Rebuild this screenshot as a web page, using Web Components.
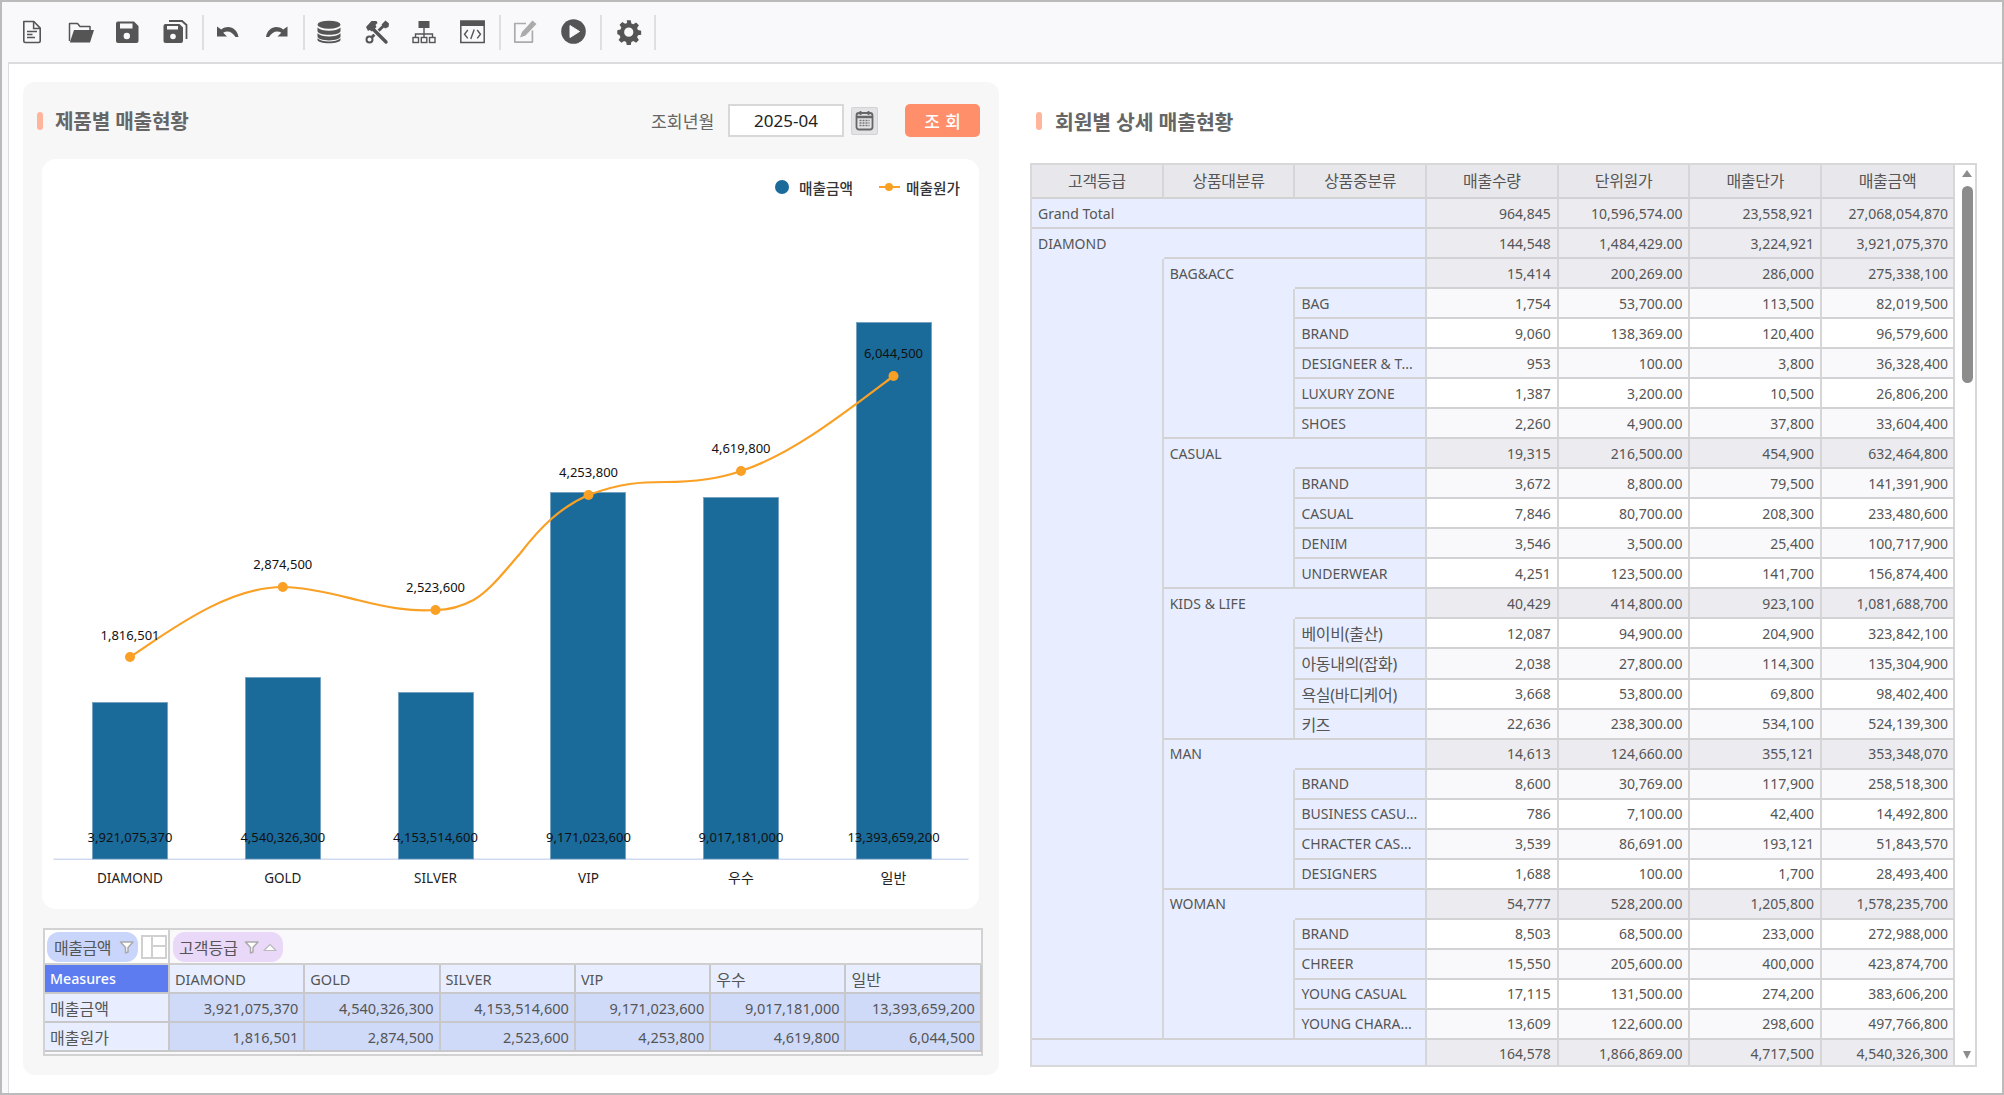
<!DOCTYPE html>
<html lang="ko"><head><meta charset="utf-8"><title>매출현황</title>
<style>
html,body{margin:0;height:100%;overflow:hidden}
body{font-family:"Noto Sans","Noto Sans CJK KR",sans-serif;background:#fff}
app-shell{height:1095px}
</style></head><body>
<app-shell>
  <tool-bar slot="bar"></tool-bar>
  <sales-panel slot="left" heading="제품별 매출현황">
    <query-form slot="tools"></query-form>
    <sales-chart></sales-chart>
    <pivot-mini></pivot-mini>
  </sales-panel>
  <member-panel slot="right" heading="회원별 상세 매출현황">
    <detail-table></detail-table>
  </member-panel>
</app-shell>
<script>
const KFONT='"Noto Sans","Noto Sans CJK KR",sans-serif';
function def(name,html,extra){
  class C extends HTMLElement{
    constructor(){super();this.attachShadow({mode:'open'}).innerHTML=typeof html==='function'?html(this):html;}
    connectedCallback(){if(extra)extra(this);}
  }
  customElements.define(name,C);
}
def('app-shell',`<style>
:host{display:flex;flex-direction:column;box-sizing:border-box;border:2px solid #bbb;border-left-width:2px;background:#f9f9fb;width:2004px}
.main{flex:1;margin-left:6px;background:#fff;border-top:2px solid #dcdcdf;border-left:1px solid #dcdcdf;display:flex;padding:18px 0 16px 14px;min-height:0;gap:31px}
</style><slot name="bar"></slot><div class="main"><slot name="left"></slot><slot name="right"></slot></div>`);

const D='#555';
const ICONS={
 file:`<path fill="none" stroke="${D}" stroke-width="1.6" stroke-linejoin="round" d="M3.8 1.5h10l6.4 6.6v13a1.4 1.4 0 0 1-1.4 1.4H5.2a1.4 1.4 0 0 1-1.4-1.4z"/><path fill="none" stroke="${D}" stroke-width="1.5" d="M13.6 1.8v6.6h6.4"/><path stroke="${D}" stroke-width="1.5" d="M7 11.5h10M7 14.5h5.5M7 17.5h8"/>`,
 open:`<path fill="none" stroke="${D}" stroke-width="1.5" stroke-linejoin="round" d="M1.5 21V3.5h8l2.5 3h10V10"/><path fill="${D}" d="M6 10h20l-4 12.5H1.8z"/>`,
 save:`<path fill="${D}" d="M2.5 1.5h16l4.5 4.5v15a2 2 0 0 1-2 2H2.5a2 2 0 0 1-2-2v-17.5a2 2 0 0 1 2-2z" transform="translate(.5 0)"/><rect x="5" y="3.5" width="12.5" height="5" fill="#f9f9fb"/><circle cx="11.8" cy="16" r="3.2" fill="#f9f9fb"/>`,
 saveas:`<path fill="none" stroke="${D}" stroke-width="1.8" d="M6 1h13l4.500 4v14"/><path fill="${D}" d="M2.5 4h14l3.5 3.500V21a2 2 0 0 1-2 2H2.5a2 2 0 0 1-2-2V6a2 2 0 0 1 2-2z"/><rect x="4" y="6" width="11" height="3.5" fill="#f9f9fb"/><circle cx="10" cy="16.5" r="2.8" fill="#f9f9fb"/>`,
 undo:`<path fill="${D}" d="M1 5.5v10h10l-3.800-3.800c3.800-2.600 9.200-1.400 12.300 4.300h3C21 7 12.500 3.200 5.300 8.500z" transform="translate(0 1)"/>`,
 redo:`<path fill="${D}" d="M23.5 5.5v10h-10l3.800-3.800c-3.800-2.600-9.200-1.400-12.300 4.300H2C3.500 7 12 3.200 19.200 8.500z" transform="translate(0 1)"/>`,
 db:`<ellipse cx="12" cy="4.7" rx="11.5" ry="4" fill="${D}"/><path fill="${D}" d="M.5 7.500C3 10 7 10.700 12 10.700s9-.7 11.500-3.200v3.400c0 2.300-5.100 3.900-11.500 3.900S.5 13.200.5 10.900z"/><path fill="${D}" d="M.5 13.200C3 15.700 7 16.400 12 16.400s9-.7 11.500-3.200v3.400c0 2.300-5.100 3.900-11.500 3.900S.5 18.900.5 16.600z"/><path fill="${D}" d="M.5 18.200c2.500 2.500 6.500 3.200 11.500 3.200s9-.7 11.500-3.200v1.500c0 2.300-5.100 3.500-11.500 3.500S.5 22 .5 19.700z"/>`,
 tools:`<g fill="${D}"><path fill="none" stroke="${D}" stroke-width="3" d="M20 4.500 6.500 17.500"/><circle cx="4.500" cy="19.500" r="3" fill="none" stroke="${D}" stroke-width="2"/><path d="M16.500 4.500 20.500.5 24 3.500 23.500 7 20 8.500z"/><path fill="none" stroke="#f9f9fb" stroke-width="6" d="M8 9 20.500 22"/><path fill="none" stroke="${D}" stroke-width="3.400" stroke-linecap="round" d="M8 9 21 22"/><path d="M1 7 6.500 1h5l1 2-2 2 1 2-4.500 4.500-2.500-1.500-1.500 1z"/></g>`,
 tree:`<g fill="none" stroke="${D}" stroke-width="1.4"><path d="M12 7v4M3.500 17v-3h17v3M12 11v6"/><rect x="1" y="17.5" width="5.5" height="5"/><rect x="9.3" y="17.5" width="5.5" height="5"/><rect x="17.5" y="17.5" width="5.5" height="5"/></g><rect x="6.5" y="1" width="11" height="7" fill="${D}"/>`,
 code:`<rect x=".8" y="1" width="23.4" height="21.5" fill="none" stroke="${D}" stroke-width="1.5"/><rect x=".8" y="1" width="23.4" height="5" fill="${D}"/><path fill="none" stroke="${D}" stroke-width="1.4" d="M7.800 10 4.500 14.200l3.300 4.200M17.200 10l3.300 4.200-3.300 4.200M14.200 9.500l-3.400 9.500"/>`,
 edit:`<path fill="none" stroke="#ababab" stroke-width="1.7" stroke-linejoin="round" d="M13 3.500H1.800v18.600h17.600V10.500"/><path fill="#ababab" d="M19.500.5 23.500 4 12.500 15.500 7 17.500 9 12z"/>`,
 play:`<circle cx="12.5" cy="11.5" r="12.3" fill="${D}"/><path fill="#f9f9fb" d="M9 5.500 18.500 11.500 9 17.500z" stroke="#f9f9fb" stroke-linejoin="round"/>`,
 gear:`<path fill="${D}" fill-rule="evenodd" d="M10.400.3h4.200l.7 3.400 2.100.9 2.900-1.900 3 3-1.900 2.900.9 2.100 3.400.7v4.200l-3.400.7-.9 2.100 1.900 2.900-3 3-2.900-1.900-2.100.9-.7 3.400h-4.200l-.7-3.400-2.100-.9-2.900 1.900-3-3 1.900-2.900-.9-2.100L.3 15v-4.200l3.400-.7.9-2.100-1.900-2.900 3-3 2.900 1.900 2.100-.9zM12.500 8a4.900 4.900 0 1 0 0 9.800 4.900 4.900 0 0 0 0-9.800z" transform="scale(.94)"/>`
};
def('tool-btn',h=>`<style>:host{display:flex;width:47.5px;height:100%;align-items:center;justify-content:center}svg{display:block;overflow:visible}</style><svg width="25" height="24" viewBox="0 0 25 24">${ICONS[h.getAttribute('icon')]||''}</svg>`);
def('tool-bar',`<style>
:host{display:flex;align-items:center;height:60px;box-sizing:border-box;padding-left:7px;flex:none}
.s{width:2px;height:35px;background:#dfdfe2;margin:0 1px 0 3px;flex:none}
.x{margin-right:4px}
.z{margin-left:0}
</style>
<tool-btn icon="file"></tool-btn><tool-btn icon="open"></tool-btn><tool-btn icon="save"></tool-btn><tool-btn icon="saveas"></tool-btn><i class="s"></i>
<tool-btn icon="undo"></tool-btn><tool-btn icon="redo"></tool-btn><i class="s"></i>
<tool-btn icon="db"></tool-btn><tool-btn icon="tools"></tool-btn><tool-btn icon="tree"></tool-btn><tool-btn icon="code"></tool-btn><i class="s"></i>
<tool-btn icon="edit"></tool-btn><tool-btn icon="play"></tool-btn><i class="s x"></i>
<tool-btn icon="gear"></tool-btn><i class="s z"></i>`);

const HEAD=`.h{display:flex;align-items:center;height:77px;flex:none}
.m{width:6px;height:18px;border-radius:3px;background:#ffb59c;margin-right:12px;flex:none}
.t{font-size:20.2px;font-weight:700;color:#666;letter-spacing:-.2px;white-space:nowrap}`;
def('sales-panel',h=>`<style>
:host{display:flex;flex-direction:column;box-sizing:border-box;width:976px;height:993px;background:#f7f7f8;border-radius:12px;padding:0 19px 0 14px}
${HEAD}
.tl{margin-left:auto}
::slotted(sales-chart){margin-left:4.5px}
::slotted(pivot-mini){margin:19px -3px 0 6px}
</style><div class="h"><i class="m"></i><span class="t">${h.getAttribute('heading')}</span><span class="tl"><slot name="tools"></slot></span></div><slot></slot>`);
def('member-panel',h=>`<style>
:host{display:flex;flex-direction:column;box-sizing:border-box;width:947px}
${HEAD}
.h{padding-left:6px;margin-bottom:4px}
.m{margin-right:13px}
.t{font-size:20.5px}
</style><div class="h"><i class="m"></i><span class="t">${h.getAttribute('heading')}</span></div><slot></slot>`);

def('query-form',`<style>
:host{display:flex;align-items:center;color:#666;font-size:17.2px}
.l{width:77px}
.i{box-sizing:border-box;width:116px;height:33px;border:2px solid #d8d8d8;background:#fff;color:#222;font-size:17px;display:flex;align-items:center;justify-content:center}
.c{box-sizing:border-box;width:27px;height:28px;margin:0 27px 0 7px;background:#e3e3e5;border:1px solid #d3d3d5;border-radius:2px;display:flex;align-items:center;justify-content:center}
.b{box-sizing:border-box;width:75px;height:33px;background:#ff8e6b;border-radius:5px;color:#fff;display:flex;align-items:center;justify-content:center;font-weight:500;font-size:17px;word-spacing:1px}
svg{display:block}
</style><span class="l">조회년월</span><span class="i">2025-04</span>
<span class="c"><svg width="19" height="21" viewBox="0 0 19 21"><rect x="1.5" y="3" width="16" height="16.5" rx="2.5" fill="none" stroke="#666" stroke-width="1.8"/><path d="M1.500 7h16" stroke="#666" stroke-width="2.5"/><path d="M5.500 1v4M13.500 1v4" stroke="#666" stroke-width="1.8"/><path d="M4.500 10.500h10M4.500 13h10M4.500 15.500h10" stroke="#777" stroke-width="1.4" stroke-dasharray="2 1"/></svg></span>
<span class="b">조 회</span>`);

const POINTS=[129.5,282.3,435,588,740.5,893];
const BARS=[[92,702.5,'3,921,075,370','DIAMOND'],[245,677.5,'4,540,326,300','GOLD'],[398,692.5,'4,153,514,600','SILVER'],[550,492.5,'9,171,023,600','VIP'],[703,497.5,'9,017,181,000','우수'],[856,322.5,'13,393,659,200','일반']];
const LINE=[[657,'1,816,501',635],[587,'2,874,500',564],[610,'2,523,600',587],[495,'4,253,800',472],[471,'4,619,800',448],[376,'6,044,500',353]];
def('sales-chart',()=>{
  let s='';
  s+=`<path d="M53 859.3H968" stroke="#cfdaf0" stroke-width="1.5"/>`;
  BARS.forEach(b=>{s+=`<rect x="${b[0]}" y="${b[1]}" width="75" height="${859-b[1]}" fill="#1a6a9a" stroke="#6b9cbc" stroke-width=".7"/>`;});
  s+=`<path fill="none" stroke="#f9a025" stroke-width="2.2" d="M129.500 657C165 634 225 587 282.300 587C310 587 340 596 357 600C385 607 410 612 435 610C450 610 462 606 473 600C490 590 505 570 520 553C540 527 560 507 588 495C620 483 640 482 665 482C690 482 715 480 740.500 471C790 455 840 416 893 376"/>`;
  LINE.forEach((l,i)=>{s+=`<circle cx="${POINTS[i]}" cy="${l[0]}" r="5" fill="#f9a025"/>`;});
  BARS.forEach((b,i)=>{
    s+=`<text x="${POINTS[i]}" y="842" class="v">${b[2]}</text>`;
    s+=`<text x="${POINTS[i]}" y="883" class="c${/[가-힣]/.test(b[3])?' k':''}">${b[3]}</text>`;
  });
  LINE.forEach((l,i)=>{s+=`<text x="${POINTS[i]}" y="${l[2]+5}" class="v">${l[1]}</text>`;});
  return `<style>
:host{display:block;box-sizing:border-box;width:937.5px;height:750px;background:#fff;border-radius:14px}
.leg{display:flex;justify-content:flex-end;align-items:center;height:56px;padding-right:19px;font-size:14.7px;color:#333;font-weight:500}
.leg i{display:block;flex:none}
.d{width:14px;height:14px;border-radius:50%;background:#1a6a9a;margin-right:10px}
.li{width:21px;height:2.5px;background:#f9a025;position:relative;margin:0 6px 0 26px}
.li::after{content:"";position:absolute;left:6px;top:-3px;width:8px;height:8px;border-radius:50%;background:#f9a025}
svg{display:block;width:937.5px;height:694px}
text{font-size:13px;text-anchor:middle;fill:#111;font-family:${KFONT}}
.c{font-size:13.5px;fill:#222}.k{font-size:14px}
</style><div class="leg"><i class="d"></i><span>매출금액</span><i class="li"></i><span>매출원가</span></div>
<svg viewBox="41.5 215 937.5 694">${s}</svg>`;
});

const fil=`<svg width="20" height="18" viewBox="1 0 20 18"><path d="M4.500 4h12.500l-5 5.500V14l-2.500 1V9.500z" fill="#fff" stroke="#aaa" stroke-width="1.5" stroke-linejoin="round"/></svg>`;
const PV=[['Measures','DIAMOND','GOLD','SILVER','VIP','우수','일반'],['매출금액','3,921,075,370','4,540,326,300','4,153,514,600','9,171,023,600','9,017,181,000','13,393,659,200'],['매출원가','1,816,501','2,874,500','2,523,600','4,253,800','4,619,800','6,044,500']];
def('pivot-mini',()=>{
 let c='';
 PV.forEach((r,ri)=>r.forEach((v,ci)=>{
  const k=/[가-힣]/.test(v)?' k':'';
  const cl=ri==0?(ci==0?'me':'hd'):(ci==0?'hd':'da');
  c+=`<div class="${cl}${k}">${v}</div>`;
 }));
 return `<style>
:host{display:flex;flex-direction:column;box-sizing:border-box;height:128px;border:2px solid #d2d2d2;background:#f9f9fb;color:#555;font-size:14.5px}
.top{display:flex;align-items:center;height:35px;flex:none;border-bottom:2px solid #cfcfcf;box-sizing:border-box}
.zone{display:flex;align-items:center;height:100%;box-sizing:border-box;padding-left:2px}
.z1{width:125px;background:#fff;border-right:2px solid #cfcfcf}
.chip{display:flex;align-items:center;height:30px;border-radius:12px;box-sizing:border-box;font-size:16px;color:#555}
.c1{background:#c9d5fb;width:91px;justify-content:space-between;padding:0 1px 0 7px;letter-spacing:-.5px}
.c2{background:#e9d8f8;width:110px;padding:0 2px 0 6px}
.c2 svg:first-of-type{margin-left:4px}
.lay{width:26px;height:24px;margin-left:3px;background:#fff;border:2px solid #d0d0d0;box-sizing:border-box;flex:none}
svg{display:block;flex:none}
.g{display:grid;grid-template-columns:125px repeat(6,135.3px);grid-auto-rows:29px;flex:none}
.g>div{box-sizing:border-box;border-right:2px solid #c8c8ca;border-bottom:2px solid #c8c8ca;display:flex;align-items:center;padding:0 5px;white-space:nowrap;overflow:hidden}
.me{background:#5c7cf0;color:#fff;font-size:14.2px;font-weight:500}
.hd{background:#e8eeff}
.da{background:#cfdaf9;justify-content:flex-end;padding-right:5px!important}
.k{font-size:16px}
</style>
<div class="top"><div class="zone z1"><span class="chip c1">매출금액${fil}</span><span class="lay"><svg width="22" height="20" viewBox="0 0 22 20"><path d="M9 0v20M9 9h13" stroke="#d0d0d0" stroke-width="2"/></svg></span></div>
<div class="zone" style="padding-left:3px"><span class="chip c2">고객등급${fil}<svg width="16" height="12" viewBox="0 0 16 12"><path d="M2 9.500 8 3.500l6 6z" fill="#fff" stroke="#bbb" stroke-width="1.2" stroke-linejoin="round"/></svg></span></div></div>
<div class="g">${c}</div>`;
});

const DATA=[
[0,'Grand Total','964,845','10,596,574.00','23,558,921','27,068,054,870'],
[0,'DIAMOND','144,548','1,484,429.00','3,224,921','3,921,075,370'],
[1,'BAG&amp;ACC','15,414','200,269.00','286,000','275,338,100'],
[2,'BAG','1,754','53,700.00','113,500','82,019,500'],
[2,'BRAND','9,060','138,369.00','120,400','96,579,600'],
[2,'DESIGNEER &amp; T...','953','100.00','3,800','36,328,400'],
[2,'LUXURY ZONE','1,387','3,200.00','10,500','26,806,200'],
[2,'SHOES','2,260','4,900.00','37,800','33,604,400'],
[1,'CASUAL','19,315','216,500.00','454,900','632,464,800'],
[2,'BRAND','3,672','8,800.00','79,500','141,391,900'],
[2,'CASUAL','7,846','80,700.00','208,300','233,480,600'],
[2,'DENIM','3,546','3,500.00','25,400','100,717,900'],
[2,'UNDERWEAR','4,251','123,500.00','141,700','156,874,400'],
[1,'KIDS &amp; LIFE','40,429','414,800.00','923,100','1,081,688,700'],
[2,'베이비(출산)','12,087','94,900.00','204,900','323,842,100'],
[2,'아동내의(잡화)','2,038','27,800.00','114,300','135,304,900'],
[2,'욕실(바디케어)','3,668','53,800.00','69,800','98,402,400'],
[2,'키즈','22,636','238,300.00','534,100','524,139,300'],
[1,'MAN','14,613','124,660.00','355,121','353,348,070'],
[2,'BRAND','8,600','30,769.00','117,900','258,518,300'],
[2,'BUSINESS CASU...','786','7,100.00','42,400','14,492,800'],
[2,'CHRACTER CAS...','3,539','86,691.00','193,121','51,843,570'],
[2,'DESIGNERS','1,688','100.00','1,700','28,493,400'],
[1,'WOMAN','54,777','528,200.00','1,205,800','1,578,235,700'],
[2,'BRAND','8,503','68,500.00','233,000','272,988,000'],
[2,'CHREER','15,550','205,600.00','400,000','423,874,700'],
[2,'YOUNG CASUAL','17,115','131,500.00','274,200','383,606,200'],
[2,'YOUNG CHARA...','13,609','122,600.00','298,600','497,766,800'],
[0,'','164,578','1,866,869.00','4,717,500','4,540,326,300']];
def('detail-table',()=>{
 const HD=['고객등급','상품대분류','상품중분류','매출수량','단위원가','매출단가','매출금액'];
 let c='';
 HD.forEach((t,i)=>c+=`<div class="th" style="grid-column:${i+1};grid-row:1">${t}</div>`);
 c+=`<div class="b" style="grid-column:1;grid-row:4/30"></div>`;
 DATA.forEach((r,i)=>{
  const row=i+2, lv=r[0];
  const sum=lv<2;
  const k=/[가-힣]/.test(r[1])?' k':'';
  const open=(lv==1||r[1]==='DIAMOND');
  c+=`<div class="b${k}${open?' open':''}" style="grid-column:${lv+1}/4;grid-row:${row}">${r[1]}</div>`;
  if(open) c+=`<div class="ln" style="grid-column:${lv+2}/4;grid-row:${row}"></div>`;
  if(lv==1){
    let n=0;while(DATA[i+1+n]&&DATA[i+1+n][0]==2)n++;
    c+=`<div class="b" style="grid-column:2;grid-row:${row+1}/${row+1+n}"></div>`;
  }
  for(let j=2;j<6;j++){
    c+=`<div class="${sum?'s':(i%2?'o':'e')}${j==5?' lst':''}" style="grid-column:${j+2};grid-row:${row}">${r[j]}</div>`;
  }
 });
 return `<style>
:host{display:flex;box-sizing:border-box;width:947px;height:904px;border:2px solid #d8d8d8;overflow:hidden;background:#fff;color:#555;font-size:14px;flex:none}
.g{display:grid;grid-template-columns:131.7px 131.7px 131.7px 131.7px 131.7px 131.7px 132.8px;grid-template-rows:34px;grid-auto-rows:30.04px;flex:none;align-self:flex-start}
.g>div{box-sizing:border-box;border-right:2px solid #d6d6d8;border-bottom:2px solid #d2d2d4;display:flex;align-items:center;justify-content:flex-end;padding:0 6px;white-space:nowrap;overflow:hidden}
.g>.th{background:#e8e8ec;justify-content:center;font-size:16px;color:#555;letter-spacing:-.3px;padding:0 0 2px}
.g>.b{background:#e8eeff;justify-content:flex-start;padding-left:6px}
.g>.k{font-size:16px;letter-spacing:-.3px}
.g>.open{border-bottom:0;padding-bottom:2px}
.g>.ln{align-self:end;height:2px;padding:0;border:0;background:#d2d2d4}
.g>.lst{padding-right:5px}
.g>.s{background:#ebebf0}.g>.o{background:#f9f9fb}.g>.e{background:#fff}
.sb{flex:1;position:relative;background:#fff;min-width:0}
.up,.dn{position:absolute;width:0;height:0;border-left:5px solid transparent;border-right:5px solid transparent}
.up{left:7px;top:5px;border-bottom:7px solid #8c8c8c}
.dn{bottom:6px;border-top:8px solid #8c8c8c;border-left-width:4px;border-right-width:4px;left:8px}
.tm{position:absolute;left:7px;width:11px;top:21px;height:197px;background:#8c8c8c;border-radius:6px}
</style><div class="g">${c}</div><div class="sb"><i class="up"></i><i class="tm"></i><i class="dn"></i></div>`;
});
</script>
</body></html>
